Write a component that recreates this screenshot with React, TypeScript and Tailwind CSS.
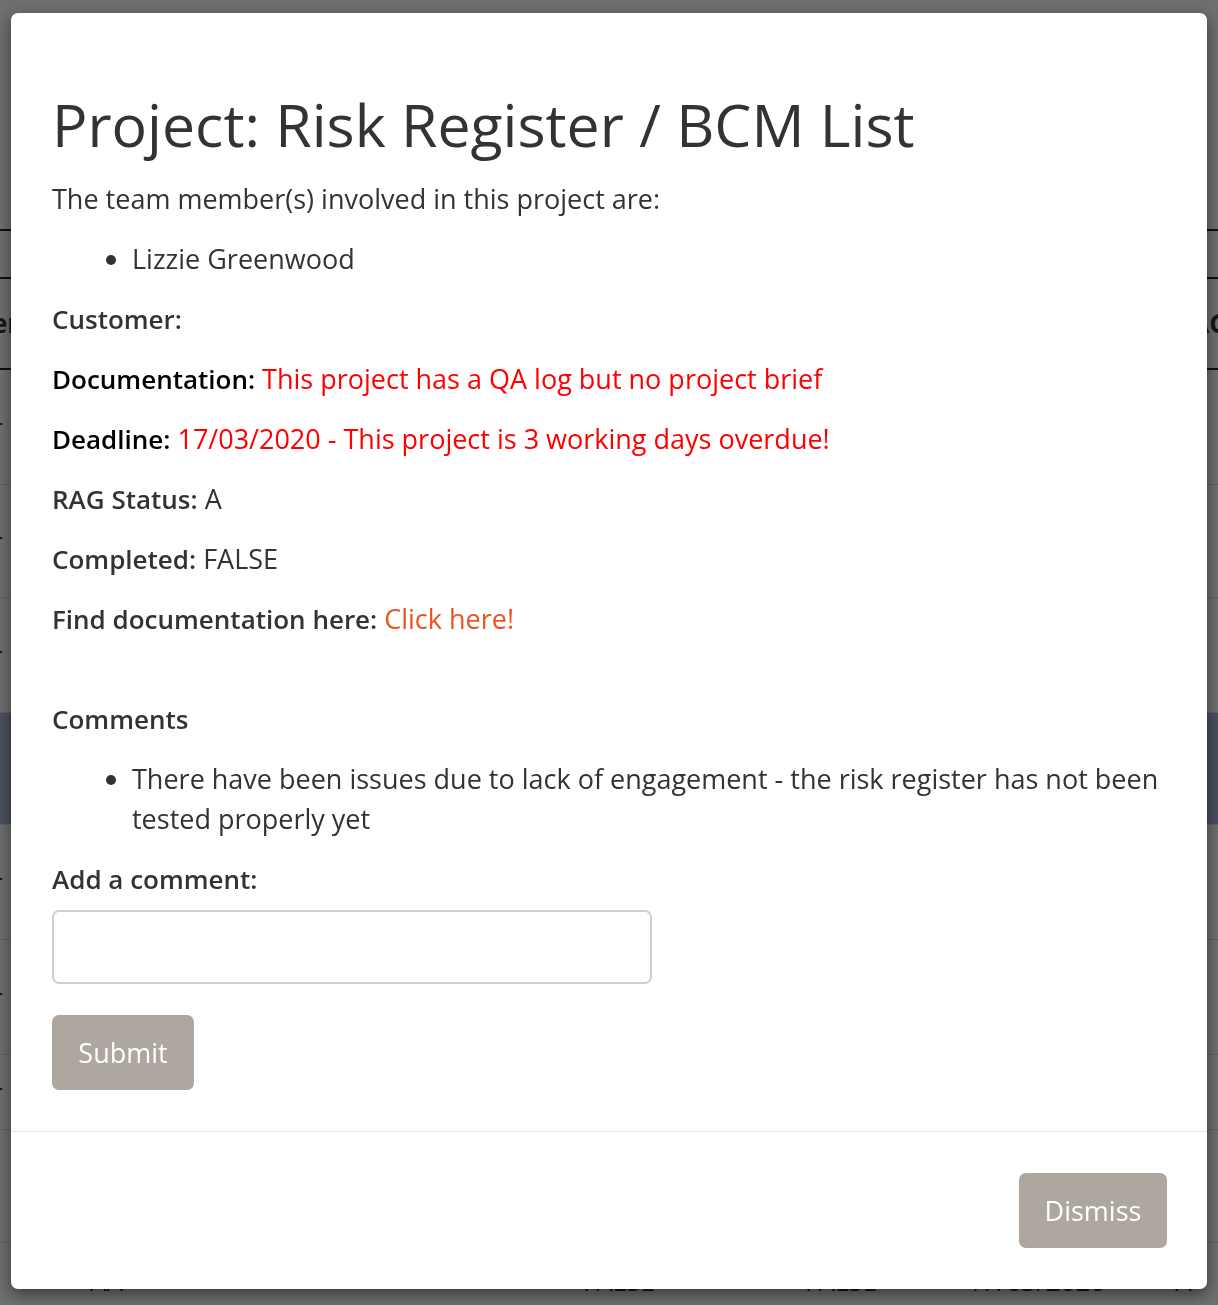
import React from "react";

const rows = [
  { h: "h-[115px]", dark: false, left: "r" },
  { h: "h-[113px]", dark: false, left: "r" },
  { h: "h-[115px]", dark: false, left: "r" },
  { h: "h-[112px]", dark: true, left: "" },
  { h: "h-[115px]", dark: false, left: "r" },
  { h: "h-[115px]", dark: false, left: "r" },
  { h: "h-[75px]", dark: false, left: "r" },
  { h: "h-[113px]", dark: false, left: "" },
];

function BackgroundTable() {
  return (
    <div className="w-full min-h-[1305px] bg-white font-['Open_Sans',sans-serif] text-[26px] text-[#333]">
      <div className="h-[229px]" />
      <div className="h-[48px] border-t-2 border-[#222]" />
      <div className="h-[93px] border-t-2 border-[#222] border-b-2 flex items-center justify-between px-[2px] font-bold">
        <span className="-ml-[10px]">er</span>
        <span className="-mr-[12px]">RAG</span>
      </div>
      {rows.map((r, i) => (
        <div
          key={i}
          className={`${r.h} border-b border-[#dee2e6] flex items-center ${r.dark ? "bg-[#a9b7d6]" : ""}`}
        >
          <span className="-ml-[8px]">{r.left}</span>
        </div>
      ))}
      <div className="h-[62px] flex items-end text-[26px]">
        <span className="ml-[90px] mb-[4px]">AA</span>
        <span className="ml-[460px] mb-[4px]">FALSE</span>
        <span className="ml-[150px] mb-[4px]">FALSE</span>
        <span className="ml-[90px] mb-[4px]">17/03/2020</span>
        <span className="ml-[70px] mb-[4px]">A</span>
      </div>
    </div>
  );
}

function Field({
  label,
  children,
  dark,
}: {
  label: string;
  children?: React.ReactNode;
  dark?: boolean;
}) {
  return (
    <p className="mb-[20px]">
      <span className={`text-[26px] font-semibold ${dark ? "text-black" : "text-[#333]"}`}>
        {label}
      </span>
      {children ? <> {children}</> : null}
    </p>
  );
}

function ProjectModal() {
  return (
    <div className="fixed inset-0 bg-black/[0.57] overflow-hidden">
      <div className="mt-[13px] mx-[11px] bg-white rounded-[7px] shadow-[0_5px_15px_rgba(0,0,0,0.5)] font-['Open_Sans',sans-serif] text-[27px] leading-[40px] text-[#333]">
        <div className="px-[41px] pt-[75px] pb-[41px]">
          <h1 className="text-[59px] leading-[72px] text-[#333] mb-[19px]">
            Project: Risk Register / BCM List
          </h1>
          <p className="mb-[20px]">The team member(s) involved in this project are:</p>
          <ul className="list-disc pl-[80px] mb-[20px]">
            <li>Lizzie Greenwood</li>
          </ul>
          <Field label="Customer:" />
          <Field label="Documentation:" dark>
            <span className="text-[#ff0000]">This project has a QA log but no project brief</span>
          </Field>
          <Field label="Deadline:" dark>
            <span className="text-[#ff0000]">17/03/2020 - This project is 3 working days overdue!</span>
          </Field>
          <Field label="RAG Status:">A</Field>
          <Field label="Completed:">FALSE</Field>
          <Field label="Find documentation here:">
            <a href="#" className="text-[#e95420]">
              Click here!
            </a>
          </Field>
          <div className="h-[40px]" />
          <p className="mb-[20px] text-[26px] font-semibold">Comments</p>
          <ul className="list-disc pl-[80px] mb-[20px]">
            <li>
              There have been issues due to lack of engagement - the risk register has not been
              tested properly yet
            </li>
          </ul>
          <p className="text-[26px] font-semibold mb-[11px]">Add a comment:</p>
          <input
            type="text"
            className="block w-[600px] h-[74px] border-2 border-[#d0d0d0] rounded-[7px] px-4 outline-none"
          />
          <button className="mt-[31px] h-[75px] w-[142px] bg-[#aea79f] text-white rounded-[7px]">
            Submit
          </button>
        </div>
        <div className="border-t border-[#e5e5e5] px-[40px] py-[41px] flex justify-end">
          <button className="h-[75px] w-[148px] bg-[#aea79f] text-white rounded-[7px]">
            Dismiss
          </button>
        </div>
      </div>
    </div>
  );
}

export default function App() {
  return (
    <div className="relative">
      <BackgroundTable />
      <ProjectModal />
    </div>
  );
}
